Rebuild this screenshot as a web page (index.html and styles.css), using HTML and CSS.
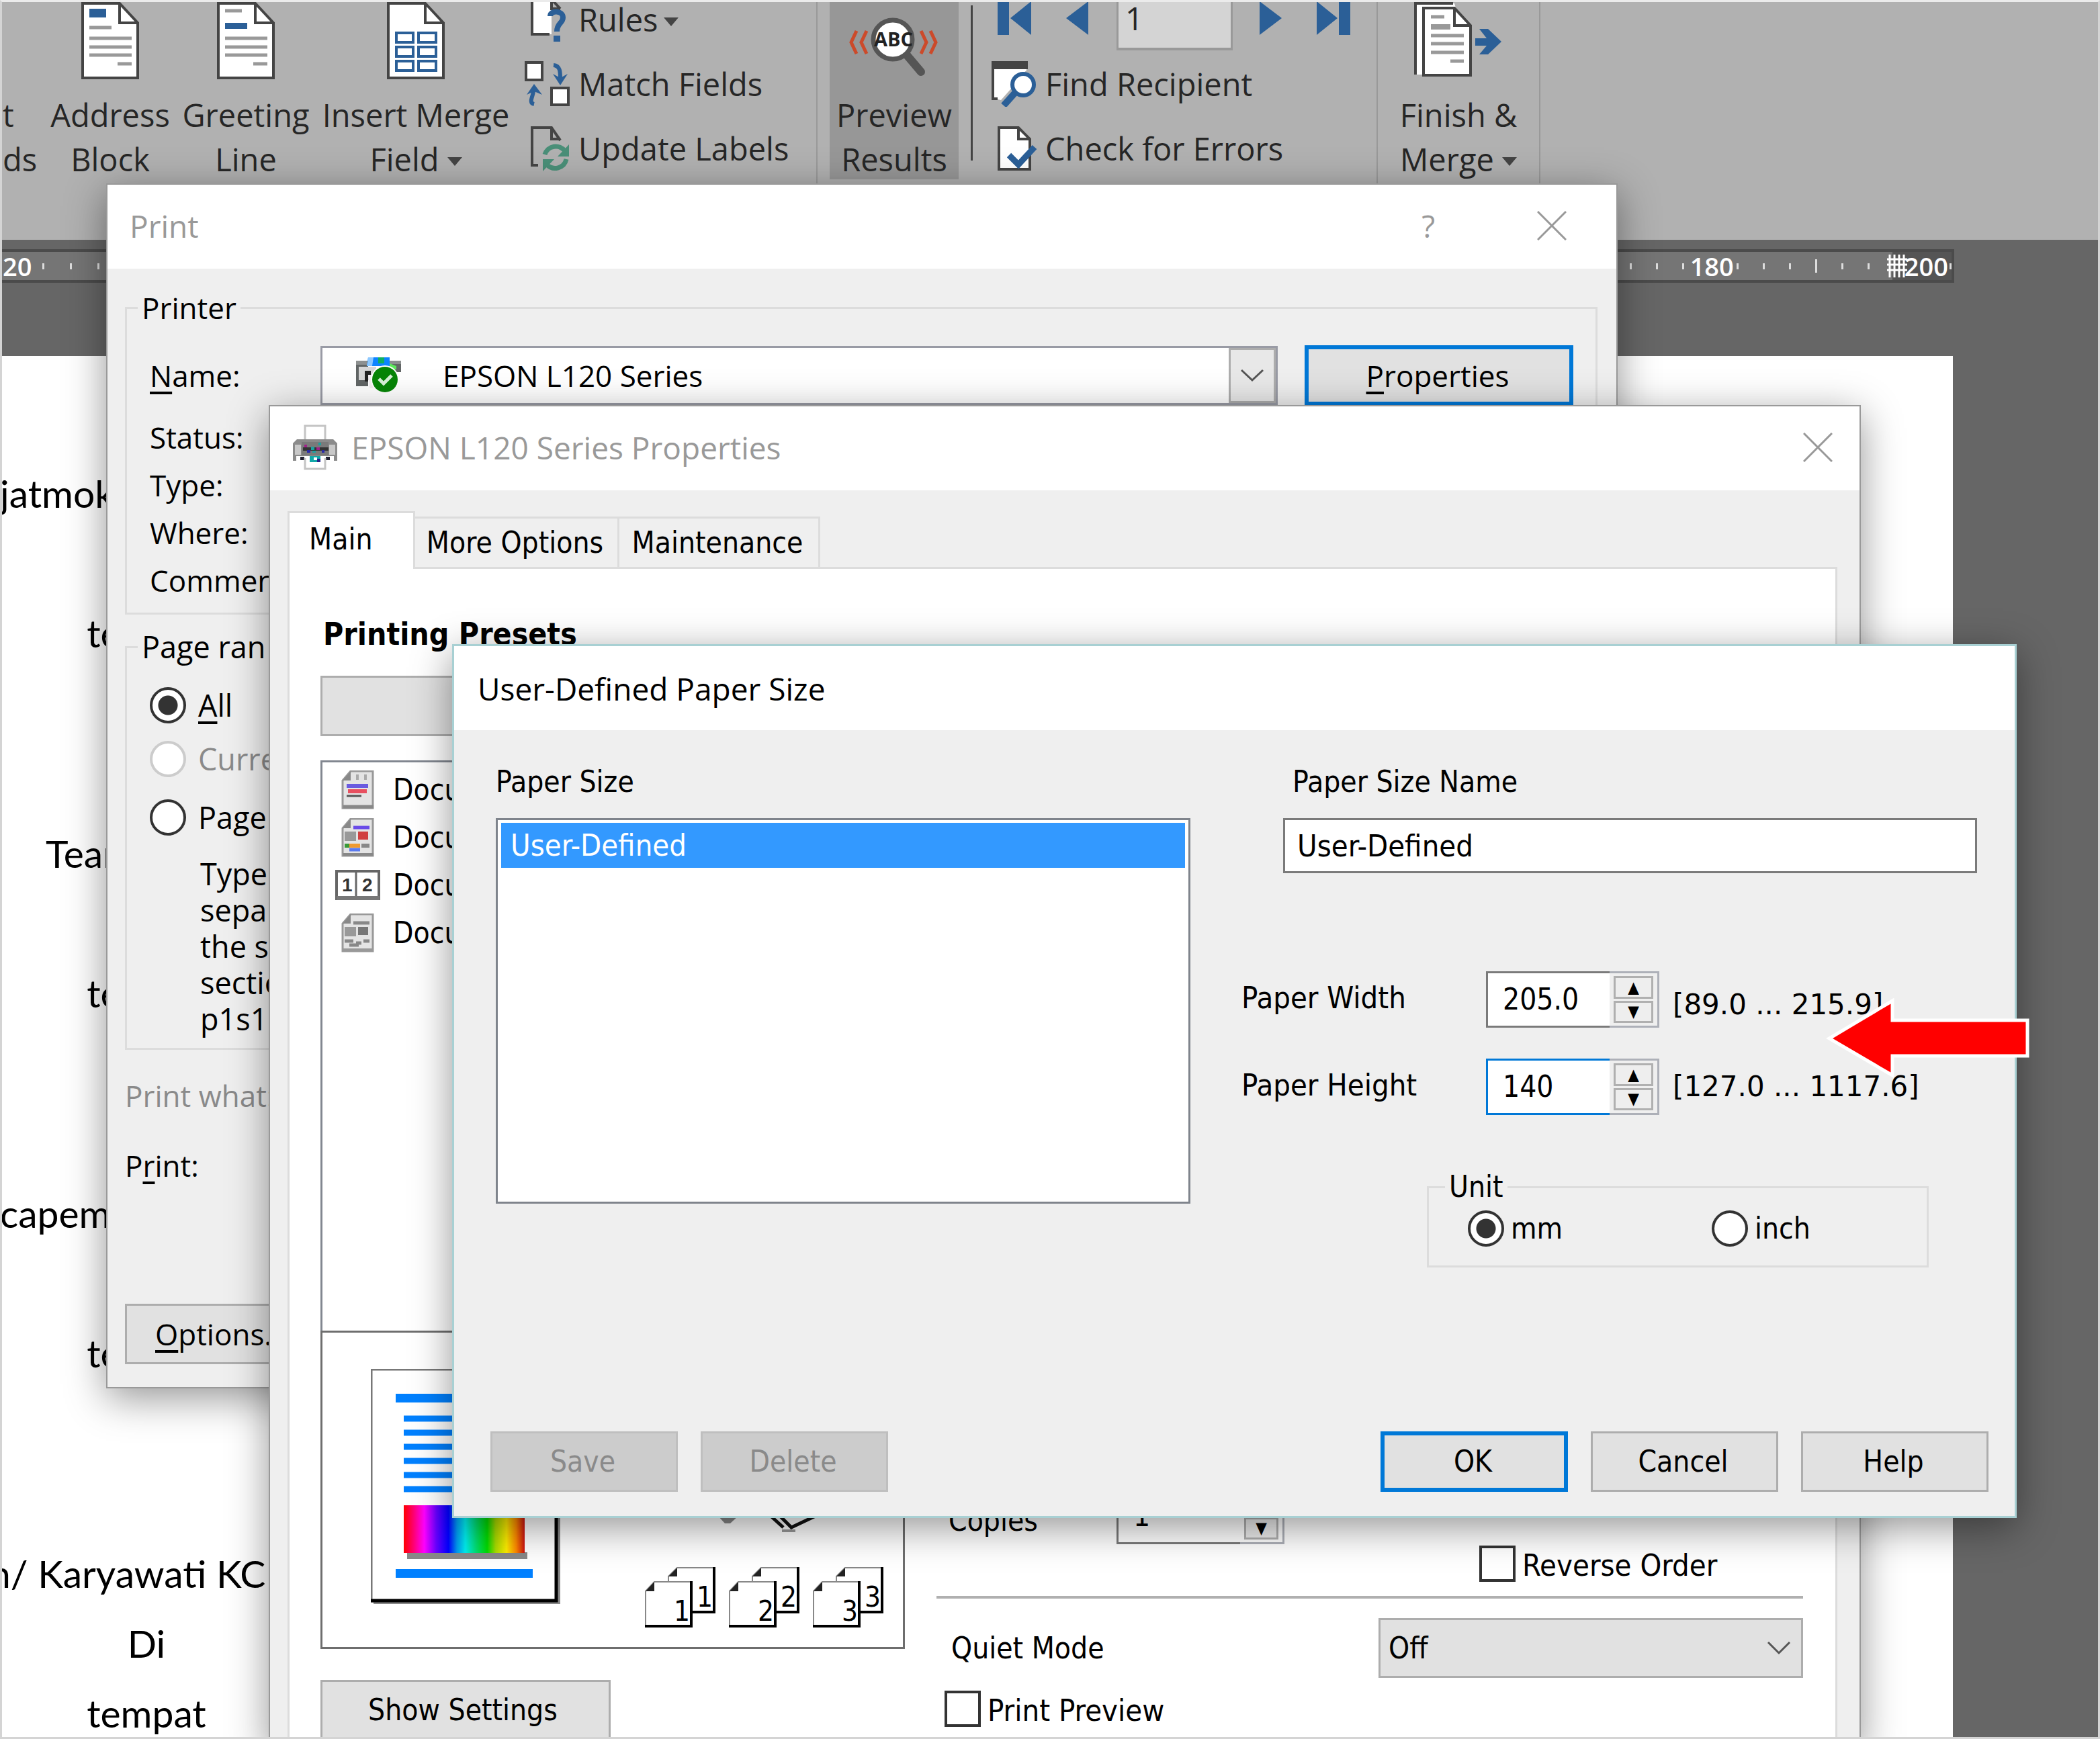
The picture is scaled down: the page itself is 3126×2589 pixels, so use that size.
FILE: index.html
```html
<!DOCTYPE html>
<html lang="en">
<head>
<meta charset="utf-8">
<title>User-Defined Paper Size</title>
<link rel="stylesheet" href="styles.css">
</head>
<body>
<div class="screen">

  <header class="ribbon">
    <button class="big cut" type="button"><span>t</span><span>ds</span></button>
    <button class="big address" type="button">
      <svg width="86" height="115" viewBox="0 0 86 115"><path d="M2 2H57L84 31V113H2Z" fill="#fff" stroke="#444" stroke-width="4"/><path d="M57 2V31H84" fill="none" stroke="#444" stroke-width="4"/><path d="M12 10h25v13H12z" fill="#2b5f97"/><path d="M12 38H45M12 54H75M12 67H75M12 79H75M54 92H75" stroke="#999" stroke-width="5"/></svg>
      <span>Address</span><span>Block</span>
    </button>
    <button class="big greeting" type="button">
      <svg width="86" height="115" viewBox="0 0 86 115"><path d="M2 2H57L84 31V113H2Z" fill="#fff" stroke="#444" stroke-width="4"/><path d="M57 2V31H84" fill="none" stroke="#444" stroke-width="4"/><path d="M12 31h33v9H12z" fill="#2b5f97"/><path d="M12 13H37M12 54H75M12 67H75M12 79H75M54 92H75" stroke="#999" stroke-width="5"/></svg>
      <span>Greeting</span><span>Line</span>
    </button>
    <button class="big merge" type="button">
      <svg width="86" height="115" viewBox="0 0 86 115"><path d="M2 2H57L84 31V113H2Z" fill="#fff" stroke="#444" stroke-width="4"/><path d="M57 2V31H84" fill="none" stroke="#444" stroke-width="4"/><path d="M14 46h25v14H14zM47 46h26v14H47zM14 67h25v14H14zM47 67h26v14H47zM14 88h25v14H14zM47 88h26v14H47z" fill="#fff" stroke="#2b5f97" stroke-width="4"/></svg>
      <span>Insert Merge</span><span>Field<i class="caret"></i></span>
    </button>
    <div class="stack fields">
      <button class="small" type="button">
        <svg width="68" height="68" viewBox="0 0 68 68"><path d="M11 4H40V56H11Z" fill="#fff"/><path d="M37 56H11V4H40M40 4L53 18M40 4V18H53" fill="none" stroke="#444" stroke-width="4"/><path d="M38 29C38 20 57 20 57 31C57 40 48 39 48 52" fill="none" stroke="#2b5f97" stroke-width="8"/><path d="M43 58h10v9H43z" fill="#2b5f97"/></svg>
        <span>Rules<i class="caret"></i></span>
      </button>
      <button class="small" type="button">
        <svg width="68" height="68" viewBox="0 0 68 68"><path d="M2 2h24v26H2zM40 40h25v25H40z" fill="#fff" stroke="#444" stroke-width="4"/><path d="M43 6C53 7 53 16 53 26M14 64C5 62 13 52 13 44" fill="none" stroke="#2b5f97" stroke-width="6"/><path d="M42 19L53 36L64 19L53 25ZM3 50L14 34L26 50L14 45Z" fill="#2b5f97"/></svg>
        Match Fields
      </button>
      <button class="small" type="button">
        <svg width="68" height="68" viewBox="0 0 68 68"><path d="M20 59H11V3H40L53 22M40 3V20H53" fill="none" stroke="#444" stroke-width="4"/><path d="M30 43A17 17 0 0 1 60 38M62 50A17 17 0 0 1 33 58" fill="none" stroke="#4a8f78" stroke-width="7"/><path d="M66 28V46H49ZM27 68V50H44Z" fill="#4a8f78"/></svg>
        Update Labels
      </button>
    </div>
    <button class="big preview" type="button">
      <svg width="140" height="115" viewBox="0 0 140 115"><path d="M14 43L6 60L14 77M29 43L21 60L29 77M110 43L118 60L110 77M124 43L132 60L124 77" fill="none" stroke="#cc4a2a" stroke-width="5"/><path d="M88 78L110 104" stroke="#555" stroke-width="12" stroke-linecap="round"/><circle cx="68" cy="56" r="29" fill="#fff" stroke="#555" stroke-width="7"/><text x="69" y="66" text-anchor="middle" class="abc">ABC</text></svg>
      <span>Preview</span><span>Results</span>
    </button>
    <div class="stack navigate">
      <div class="records">
        <button type="button" aria-label="First record"><svg width="50" height="50" viewBox="0 0 50 50"><path d="M0 0h17v50H0zM50 0V50L19 25Z" fill="#2b5f97"/></svg></button>
        <button type="button" aria-label="Previous record"><svg width="33" height="50" viewBox="0 0 33 50"><path d="M33 0V50L0 25Z" fill="#2b5f97"/></svg></button>
        <input type="text" value="1" aria-label="Record number">
        <button type="button" aria-label="Next record"><svg width="33" height="50" viewBox="0 0 33 50"><path d="M0 0V50L33 25Z" fill="#2b5f97"/></svg></button>
        <button type="button" aria-label="Last record"><svg width="50" height="50" viewBox="0 0 50 50"><path d="M33 0h17v50H33zM0 0V50L31 25Z" fill="#2b5f97"/></svg></button>
      </div>
      <button class="small" type="button">
        <svg width="68" height="68" viewBox="0 0 68 68"><path d="M4 12V56L14 58L30 40V30L52 14V12Z" fill="#fff"/><path d="M0 0H54V12H0Z" fill="#444"/><path d="M2 10V56H9" fill="none" stroke="#444" stroke-width="4"/><path d="M36 46L18 66" stroke="#2b5f97" stroke-width="10"/><circle cx="47" cy="35" r="16" fill="#fff" stroke="#2b5f97" stroke-width="6"/></svg>
        Find Recipient
      </button>
      <button class="small" type="button">
        <svg width="68" height="68" viewBox="0 0 68 68"><path d="M11 3H40L57 20V65H11Z" fill="#fff" stroke="#444" stroke-width="4"/><path d="M40 3V20H57" fill="none" stroke="#444" stroke-width="4"/><path d="M26 44L40 58L64 32" fill="none" stroke="#2b5f97" stroke-width="9"/></svg>
        Check for Errors
      </button>
    </div>
    <button class="big finish" type="button">
      <svg width="132" height="115" viewBox="0 0 132 115"><path d="M2 108V2H60L62 9H15V108Z" fill="#fff"/><path d="M2 108V2H58" fill="none" stroke="#444" stroke-width="4"/><path d="M14 9H60L84 35V109H14Z" fill="#fff" stroke="#444" stroke-width="4"/><path d="M60 9V35H84" fill="none" stroke="#444" stroke-width="4"/><path d="M25 22H45M25 50H74M25 62H74M25 75H74M54 88H74" stroke="#999" stroke-width="5"/><path d="M25 33h29v8H25z" fill="#999"/><path d="M91 54H108L97 40H110L130 59L110 78H97L108 65H91Z" fill="#2b5f97"/></svg>
      <span>Finish &amp;</span><span>Merge<i class="caret"></i></span>
    </button>
  </header>

  <div class="ruler">
    <div class="marks"><b>20</b><i></i><i></i><i></i></div>
    <div class="marks"><i></i><i></i><i></i><b>180</b><i></i><i></i><i></i><i class="half"></i><i></i><i></i></div>
    <div class="marks margin"><svg width="30" height="34" viewBox="0 0 30 34"><path d="M4 0V34M11 0V34M18 0V34M25 0V34M0 7H30M0 15H30M0 23H30" stroke="#fff" stroke-width="3"/></svg><b>200</b><i></i></div>
  </div>

  <main class="document">
    <section><p class="name">jatmoko</p><p>Di</p><p>tempat</p></section>
    <section><p class="name team">Team</p><p>Di</p><p>tempat</p></section>
    <section><p class="name">capem</p><p>Di</p><p>tempat</p></section>
    <section><p class="name staff">n/ Karyawati KCP</p><p>Di</p><p>tempat</p></section>
  </main>

  <section class="window print">
    <header class="titlebar">
      <h2>Print</h2>
      <button type="button" class="help" aria-label="Help">?</button>
      <button type="button" aria-label="Close"><svg width="44" height="44" viewBox="0 0 44 44"><path d="M1 1L43 43M43 1L1 43" stroke="#999" stroke-width="3"/></svg></button>
    </header>
    <div class="print-body">
      <fieldset class="printer">
        <legend>Printer</legend>
        <div class="name-row">
          <label for="printer-name"><u>N</u>ame:</label>
          <div class="combo">
            <svg width="68" height="54" viewBox="0 0 68 54"><path d="M0 5H18V43H0ZM49 5H67V22H49Z" fill="#626666"/><path d="M0 5H16V11H0ZM49 5H67V10H49Z" fill="#8d9090"/><path d="M4 14H30V34H4Z" fill="#d6d6d6"/><path d="M13 20H22V27H18V36H13Z" fill="#222"/><path d="M18 26H30V46H20Z" fill="#f4f0f2"/><path d="M18 0H50V13H16Z" fill="#0d84ff"/><path d="M18 0H26L24 13H16Z" fill="#8cc8ff"/><path d="M33 0H42V9H33Z" fill="#0fae62"/><path d="M50 9L60 13V18H50Z" fill="#5ce85c"/><circle cx="43" cy="33" r="21" fill="#fff"/><circle cx="43" cy="33" r="19" fill="#078507"/><path d="M34 32L41 39L53 27" fill="none" stroke="#d8f0d8" stroke-width="5"/></svg>
            <select id="printer-name"><option>EPSON L120 Series</option></select>
            <span class="drop"><svg width="36" height="20" viewBox="0 0 36 20"><path d="M2 2L18 17L34 2" fill="none" stroke="#555" stroke-width="3"/></svg></span>
          </div>
          <button type="button" class="btn default"><u>P</u>roperties</button>
        </div>
        <ul class="facts"><li>Status:</li><li>Type:</li><li>Where:</li><li>Comment:</li></ul>
      </fieldset>
      <fieldset class="range">
        <legend>Page ran</legend>
        <label class="choice"><input type="radio" name="range" checked><span><u>A</u>ll</span></label>
        <label class="choice off"><input type="radio" name="range" disabled><span>Current</span></label>
        <label class="choice tall"><input type="radio" name="range"><span>Pa<u>g</u>e</span></label>
        <p>Type<br>sepa<br>the s<br>section<br>p1s1,</p>
      </fieldset>
      <p class="line off">Print what:</p>
      <p class="line">P<u>r</u>int:</p>
      <button type="button" class="btn options"><u>O</u>ptions...</button>
    </div>
  </section>

  <section class="window properties">
    <header class="titlebar">
      <svg width="68" height="68" viewBox="0 0 68 68"><path d="M19 2H49V24H19Z" fill="#fff" stroke="#c4c4c4" stroke-width="3"/><path d="M7 22H61L67 28V54H1V28Z" fill="#8b8b8b"/><path d="M4 30H13V45H4ZM55 30H64V45H55Z" fill="#c8c8c8"/><path d="M14 26H54V46H14Z" fill="#7a7a7a"/><path d="M16 34H54V39H16Z" fill="#333"/><path d="M18 30h4v4h-4zM36 34h5v4h-5z" fill="#a0208a"/><path d="M22 38h5v4h-5zM44 38h4v4h-4z" fill="#2a2aa8"/><path d="M28 33h5v5h-5zM39 27h4v4h-4zM30 39h5v3h-5z" fill="#1ea0a0"/><path d="M6 47H62V55H6Z" fill="#fff"/><path d="M12 48h6v5h-6zM50 48h6v5h-6z" fill="#223"/><path d="M19 50V66H49V50" fill="#fff" stroke="#c4c4c4" stroke-width="3"/><path d="M26 47H42V56H26Z" fill="#12a8a8"/><path d="M32 49h5v4h-5z" fill="#fff"/><path d="M37 51h5v5h-5z" fill="#22228a"/></svg>
      <h2>EPSON L120 Series Properties</h2>
      <button type="button" aria-label="Close"><svg width="44" height="44" viewBox="0 0 44 44"><path d="M1 1L43 43M43 1L1 43" stroke="#999" stroke-width="3"/></svg></button>
    </header>
    <nav class="tabs">
      <button type="button" class="tab active">Main</button>
      <button type="button" class="tab more">More Options</button>
      <button type="button" class="tab upkeep">Maintenance</button>
    </nav>
    <div class="tab-page">
      <div class="presets">
        <h3>Printing Presets</h3>
        <button type="button" class="btn" aria-label="Add or remove presets"></button>
        <ul class="preset-list">
          <li><svg width="50" height="58" viewBox="0 0 50 58"><path d="M14 1H47V56H2V15Z" fill="#e4e4e4" stroke="#999" stroke-width="3"/><path d="M2 15H14V1Z" fill="#888"/><path d="M24 6V14M36 6V14" stroke="#aaa" stroke-width="4"/><path d="M8 23H40" stroke="#6a5be0" stroke-width="6"/><path d="M10 31H38" stroke="#e85060" stroke-width="6"/><path d="M8 38H30" stroke="#555" stroke-width="3"/><path d="M3 54H48" stroke="#888" stroke-width="5"/></svg>Document</li>
          <li><svg width="50" height="58" viewBox="0 0 50 58"><path d="M14 1H47V56H2V15Z" fill="#e4e4e4" stroke="#999" stroke-width="3"/><path d="M2 15H14V1Z" fill="#888"/><path d="M18 14H42" stroke="#6a4be8" stroke-width="5"/><path d="M5 20H22V34H5Z" fill="#999"/><path d="M25 20H40V32H25Z" fill="#d04040"/><path d="M5 41H12" stroke="#3a9a3a" stroke-width="6"/><path d="M12 41H28" stroke="#f09a30" stroke-width="6"/><path d="M12 47H28" stroke="#5a7af0" stroke-width="5"/><path d="M30 41H42" stroke="#888" stroke-width="6"/><path d="M3 54H48" stroke="#888" stroke-width="4"/></svg>Document</li>
          <li><svg width="68" height="46" viewBox="0 0 68 46"><path d="M2 2H65V43H2Z" fill="#fff" stroke="#666" stroke-width="4"/><path d="M31 2V41" stroke="#666" stroke-width="3"/><path d="M2 42H66" stroke="#777" stroke-width="6"/><text x="10" y="32" class="pages">1</text><text x="40" y="32" class="pages">2</text></svg>Document</li>
          <li><svg width="50" height="58" viewBox="0 0 50 58"><path d="M14 1H47V56H2V15Z" fill="#e4e4e4" stroke="#999" stroke-width="3"/><path d="M2 15H14V1Z" fill="#888"/><path d="M18 14H42" stroke="#888" stroke-width="5"/><path d="M5 20H22V34H5Z" fill="#999"/><path d="M25 20H40V32H25Z" fill="#777"/><path d="M5 41H18M22 44H30M33 41H42M12 47H26" stroke="#888" stroke-width="5"/><path d="M3 54H48" stroke="#999" stroke-width="4"/></svg>Document</li>
        </ul>
        <div class="sheet-box">
          <svg width="284" height="352" viewBox="0 0 284 352">
            <defs><linearGradient id="spectrum"><stop offset="0" stop-color="#f00"/><stop offset=".08" stop-color="#ff0070"/><stop offset=".17" stop-color="#f0f"/><stop offset=".27" stop-color="#60f"/><stop offset=".37" stop-color="#00f"/><stop offset=".44" stop-color="#09e"/><stop offset=".51" stop-color="#0ee"/><stop offset=".6" stop-color="#00e070"/><stop offset=".69" stop-color="#0d0"/><stop offset=".76" stop-color="#ad0"/><stop offset=".85" stop-color="#fe0"/><stop offset=".93" stop-color="#f80"/><stop offset="1" stop-color="#c11"/></linearGradient></defs>
            <path d="M4 348H280V6" fill="none" stroke="#888" stroke-width="4"/>
            <path d="M1 1H276V346H1Z" fill="#fff" stroke="#777" stroke-width="3"/>
            <path d="M0 345H276V0" fill="none" stroke="#000" stroke-width="5"/>
            <path d="M37 37H241V50H37ZM37 298H241V311H37Z" fill="#0080ff"/>
            <path d="M49 74H229M49 95H229M49 116H229M49 137H229M49 158H229M49 179H229" stroke="#0080ff" stroke-width="9"/>
            <path d="M54 273H233V283H54Z" fill="#888"/>
            <path d="M49 203H229V274H49Z" fill="url(#spectrum)"/>
          </svg>
          <div class="output">
            <svg width="360" height="40" viewBox="0 0 360 40"><path d="M108 6H140L127 18H119Z" fill="#888"/><path d="M184 4L206 24M198 4L218 24L256 6" fill="none" stroke="#111" stroke-width="5"/><path d="M204 29H224" stroke="#999" stroke-width="4"/></svg>
            <div class="collate">
              <svg width="105" height="90" viewBox="0 0 105 90"><path d="M48 1H103V67H35V14Z" fill="#fff" stroke="#888" stroke-width="2"/><path d="M103 0V67H60" fill="none" stroke="#000" stroke-width="4"/><path d="M48 1V14H35Z" fill="#222"/><text x="77" y="59" class="num">1</text><path d="M14 22H69V88H1V36Z" fill="#fff" stroke="#888" stroke-width="2"/><path d="M69 21V88H0" fill="none" stroke="#000" stroke-width="4"/><path d="M14 22V36H1Z" fill="#222"/><text x="43" y="80" class="num">1</text></svg>
              <svg width="105" height="90" viewBox="0 0 105 90"><path d="M48 1H103V67H35V14Z" fill="#fff" stroke="#888" stroke-width="2"/><path d="M103 0V67H60" fill="none" stroke="#000" stroke-width="4"/><path d="M48 1V14H35Z" fill="#222"/><text x="77" y="59" class="num">2</text><path d="M14 22H69V88H1V36Z" fill="#fff" stroke="#888" stroke-width="2"/><path d="M69 21V88H0" fill="none" stroke="#000" stroke-width="4"/><path d="M14 22V36H1Z" fill="#222"/><text x="43" y="80" class="num">2</text></svg>
              <svg width="105" height="90" viewBox="0 0 105 90"><path d="M48 1H103V67H35V14Z" fill="#fff" stroke="#888" stroke-width="2"/><path d="M103 0V67H60" fill="none" stroke="#000" stroke-width="4"/><path d="M48 1V14H35Z" fill="#222"/><text x="77" y="59" class="num">3</text><path d="M14 22H69V88H1V36Z" fill="#fff" stroke="#888" stroke-width="2"/><path d="M69 21V88H0" fill="none" stroke="#000" stroke-width="4"/><path d="M14 22V36H1Z" fill="#222"/><text x="43" y="80" class="num">3</text></svg>
            </div>
          </div>
        </div>
        <button type="button" class="btn show">Show Settings</button>
      </div>
      <div class="job">
        <div class="copies">
          <label for="copies">Copies</label>
          <span class="spin"><input id="copies" type="text" value="1"><span class="steps"><button type="button" aria-label="More">▲</button><button type="button" aria-label="Fewer">▼</button></span></span>
        </div>
        <label class="tick reverse"><input type="checkbox"><span>Reverse Order</span></label>
        <hr>
        <div class="quiet">
          <label for="quiet">Quiet Mode</label>
          <div class="pick"><select id="quiet"><option>Off</option></select><svg width="36" height="22" viewBox="0 0 36 22"><path d="M2 2L18 18L34 2" fill="none" stroke="#555" stroke-width="3"/></svg></div>
        </div>
        <label class="tick"><input type="checkbox"><span>Print Preview</span></label>
      </div>
    </div>
  </section>

  <section class="window paper">
    <header class="titlebar"><h2>User-Defined Paper Size</h2></header>
    <div class="paper-body">
      <div class="sizes">
        <span id="sizes-label">Paper Size</span>
        <ul role="listbox" aria-labelledby="sizes-label"><li role="option" aria-selected="true">User-Defined</li></ul>
      </div>
      <div class="details">
        <div class="size-name">
          <label for="size-name">Paper Size Name</label>
          <input id="size-name" type="text" value="User-Defined">
        </div>
        <div class="measure">
          <label for="width">Paper Width</label>
          <span class="spin"><input id="width" type="text" value="205.0"><span class="steps"><button type="button" aria-label="Wider">▲</button><button type="button" aria-label="Narrower">▼</button></span></span>
          <span class="limits">[89.0 ... 215.9]</span>
        </div>
        <div class="measure">
          <label for="height">Paper Height</label>
          <span class="spin focus"><input id="height" type="text" value="140"><span class="steps"><button type="button" aria-label="Taller">▲</button><button type="button" aria-label="Shorter">▼</button></span></span>
          <span class="limits">[127.0 ... 1117.6]</span>
        </div>
        <fieldset class="unit">
          <legend>Unit</legend>
          <label class="choice"><input type="radio" name="unit" checked><span>mm</span></label>
          <label class="choice"><input type="radio" name="unit"><span>inch</span></label>
        </fieldset>
      </div>
    </div>
    <footer class="actions">
      <button type="button" class="btn" disabled>Save</button>
      <button type="button" class="btn" disabled>Delete</button>
      <button type="button" class="btn default push">OK</button>
      <button type="button" class="btn">Cancel</button>
      <button type="button" class="btn">Help</button>
    </footer>
  </section>

  <svg class="pointer" width="310" height="124" viewBox="0 0 310 124"><path d="M7 62L101 6V35H302V88H101V117Z" fill="#f00" stroke="#fff" stroke-width="5"/></svg>
</div>
</body>
</html>
```

FILE: styles.css
```css
*, *::before, *::after { box-sizing: border-box; }
body, h2, h3, p, ul, fieldset, legend { margin: 0; padding: 0; }
ul { list-style: none; }
svg { display: block; flex: none; }
button, input, select { font: inherit; color: inherit; margin: 0; border-radius: 0; outline: 0; }
button { background: none; border: 0; padding: 0; }

.screen {
  position: relative;
  height: 100vh;
  overflow: hidden;
  background: #666;
  color: #000;
  font-family: "Open Sans", "Noto Sans", sans-serif;
  font-size: 44px;
  line-height: 60px;
}
.screen::after {
  content: "";
  position: absolute;
  inset: 0;
  border: 3px solid #d4d4d4;
  border-top-color: #ebebeb;
  pointer-events: none;
}

/* Ribbon */
.ribbon {
  display: flex;
  align-items: stretch;
  height: 357px;
  overflow: hidden;
  background: #b1b1b1;
  color: #262626;
  font-size: 47px;
  line-height: 66px;
}
.big {
  display: flex;
  flex-direction: column;
  align-items: center;
  height: 267px;
  padding-top: 3px;
}
.big svg { margin-bottom: 20px; }
.cut { width: 61px; padding-top: 138px; align-items: flex-start; }
.cut span { padding-left: 4px; }
.address { width: 206px; }
.greeting { width: 198px; }
.merge { width: 308px; }
.preview { width: 192px; margin: 0 18px; background: #979797; }
.finish { width: 242px; height: 357px; border-right: 2px solid #999; }
.abc { font: bold 29px "Open Sans", sans-serif; fill: #222; }
.caret {
  display: inline-block;
  margin-left: 12px;
  border: 11px solid transparent;
  border-top: 13px solid #444;
  border-bottom: 0;
  vertical-align: 8px;
}
.stack { display: flex; flex-direction: column; }
.fields { width: 444px; margin-top: -19px; padding-left: 8px; border-right: 2px solid #999; }
.small { display: flex; align-items: center; gap: 12px; height: 96px; }
.small .caret { margin-left: 8px; }
.navigate { width: 606px; border-right: 2px solid #999; position: relative; padding-left: 31px; }
.navigate::before {
  content: "";
  position: absolute;
  left: 0;
  top: 8px;
  height: 231px;
  border-left: 3px solid #444;
}
.records { display: flex; height: 77px; padding: 2px 0 0 9px; }
.records button { width: 50px; height: 50px; margin-right: 52px; }
.records input + button { width: 33px; }
.records button:nth-child(2) { width: 33px; margin-right: 42px; }
.records input {
  width: 173px;
  height: 73px;
  margin-right: 40px;
  padding: 0 0 20px 10px;
  border: solid #999;
  border-width: 0 3px 4px;
  background: #d4d4d4;
}

/* Ruler */
.ruler {
  display: flex;
  justify-content: flex-end;
  height: 50px;
  margin: 14px 217px 0 0;
  border: 4px solid #4b4b4b;
  border-left: 0;
  background: #757575;
  color: #fff;
  font-size: 38px;
  line-height: 44px;
}
.marks { display: flex; align-items: center; gap: 36px; }
.marks:first-child { gap: 38px; margin-right: auto; padding-left: 4px; }
.marks i { width: 3px; height: 9px; background: #ddd; }
.marks .half { height: 20px; }
.marks b { font-weight: 600; margin: 0 -32px 0 -27px; }
.marks:first-child b { margin: 0 -22px 0 0; }
.margin { gap: 0; margin-left: 26px; background: linear-gradient(90deg, transparent 8px, #555 8px); }
.margin b { margin: 0 2px 0 -4px; }

/* Document */
.document {
  display: flex;
  flex-direction: column;
  gap: 224px;
  height: 100%;
  margin: 109px 219px 0 0;
  padding-top: 152px;
  background: #fff;
  font-family: Lato, "Open Sans", sans-serif;
  font-size: 57px;
  line-height: 104px;
  white-space: nowrap;
}
.document p { width: 436px; text-align: center; }
.document .name { text-align: left; }
.document .team { padding-left: 68px; }
.document .staff { text-indent: -16px; }

/* Windows */
.window {
  position: absolute;
  border: 2px solid #999;
  background: #efefef;
  box-shadow: 0 14px 56px rgba(0, 0, 0, .42);
}
.titlebar {
  display: flex;
  align-items: center;
  height: 125px;
  padding: 0 42px 4px 33px;
  background: #fff;
  color: #999;
  font-size: 46px;
}
.titlebar h2 { flex: 1; font-size: 46px; font-weight: 400; }
.help { margin-right: 152px; }
fieldset { --inset: 0px; min-width: 0; border: 3px solid #dcdcdc; }
legend { margin-left: calc(16px - var(--inset)); padding: 0 6px; }
u { text-decoration-thickness: 4px; text-underline-offset: 7px; }

.btn {
  height: 90px;
  padding-right: 4px;
  border: 3px solid #adadad;
  background: #e1e1e1;
  text-align: center;
}
.btn.default { border: 6px solid #0078d7; }
.btn:disabled { border-color: #bfbfbf; background: #ccc; color: #8a8a8a; }

.choice, .tick { display: flex; align-items: center; }
input[type="radio"], input[type="checkbox"] {
  appearance: none;
  flex: none;
  width: 54px;
  height: 54px;
  border: 4px solid #333;
  background: #fff;
}
input[type="radio"] { border-radius: 50%; }
input[type="radio"]:checked { background: radial-gradient(circle, #333 14px, #fff 15px); }
input[type="radio"]:disabled { border-color: #ccc; }
.off { color: #8a8a8a; }

/* Print */
.print { left: 158px; top: 273px; width: 2250px; }
.print .titlebar { padding-right: 74px; }
.print-body { padding: 28px 28px 34px 26px; }
.name-row {
  display: grid;
  grid-template-columns: 254px 1fr 400px;
  align-items: center;
  padding: 26px 33px 0 34px;
}
.combo {
  display: flex;
  align-items: center;
  height: 88px;
  margin-right: 40px;
  padding-left: 50px;
  border: 3px solid #999ba5;
  background: #fff;
}
.combo select {
  flex: 1;
  height: 82px;
  appearance: none;
  border: 0;
  padding: 0 0 0 61px;
  background: none;
}
.drop {
  display: flex;
  align-items: center;
  justify-content: center;
  width: 70px;
  height: 82px;
  border: 3px solid #adadad;
  background: #e8e8e8;
}
.facts { padding: 12px 34px; line-height: 71px; }
.range { --inset: 34px; margin-top: 18px; padding: 17px 34px 16px; font-size: 45px; white-space: nowrap; }
.range .choice { height: 80px; gap: 18px; }
.range .choice.tall { height: 94px; }
.range p { margin-top: 10px; padding-left: 75px; line-height: 54px; }
.line { margin-top: 38px; }
.line + .line { margin-top: 44px; }
.options { width: 300px; margin-top: 176px; padding-left: 42px; text-align: left; }

/* Printer properties */
.properties {
  left: 400px;
  top: 603px;
  bottom: -12px;
  width: 2370px;
  font-family: "DejaVu Sans Condensed", "Open Sans", sans-serif;
  line-height: 52px;
}
.properties .titlebar, .paper .titlebar { font-family: "Open Sans", "Noto Sans", sans-serif; line-height: 60px; }
.properties .titlebar { gap: 20px; padding-right: 40px; }
.tabs { display: flex; align-items: flex-end; padding: 31px 0 0 26px; }
.tab { height: 78px; padding-right: 4px; border: 3px solid #dcdcdc; border-left: 0; }
.tab.active {
  position: relative;
  z-index: 1;
  width: 190px;
  height: 86px;
  padding: 0 0 6px 29px;
  border-left: 3px solid #dcdcdc;
  border-bottom: 0;
  background: #fff;
  text-align: left;
}
.tab.more { width: 304px; }
.tab.upkeep { width: 299px; }
.tab-page {
  display: flex;
  gap: 47px;
  height: 100%;
  max-height: 1800px;
  margin: -3px 33px 0 26px;
  padding: 71px 48px 0 46px;
  border: 3px solid #dcdcdc;
  background: #fff;
}
.presets { display: flex; flex-direction: column; width: 870px; }
.presets h3 { margin-bottom: 36px; padding-left: 4px; font-size: 46px; font-weight: 700; }
.preset-list {
  height: 849px;
  margin-top: 36px;
  padding-top: 5px;
  border: 3px solid #828790;
  border-bottom: 0;
}
.preset-list li { display: grid; grid-template-columns: 105px 1fr; align-items: center; height: 71px; }
.preset-list svg { justify-self: center; }
.pages { font: bold 28px "Liberation Sans", sans-serif; fill: #333; }
.sheet-box { display: flex; justify-content: space-between; height: 474px; padding: 54px 24px 0 72px; border: 3px solid #6e6e6e; }
.output { display: flex; flex-direction: column; gap: 43px; padding-top: 212px; }
.collate { display: flex; gap: 20px; }
.num { font: 42px "DejaVu Sans Condensed", "Open Sans", sans-serif; fill: #000; }
.show { width: 432px; margin-top: 46px; padding-right: 8px; }
.job { display: flex; flex-direction: column; flex: 1; height: 1672px; padding-bottom: 18px; justify-content: flex-end; }
.copies { display: grid; grid-template-columns: 250px 1fr; align-items: center; padding-left: 18px; margin-bottom: 1px; }
.copies label { padding-top: 14px; }
.copies .spin { width: 250px; }
.copies input { padding-top: 10px; }
.tick { gap: 10px; height: 56px; padding-left: 12px; font-size: 45px; }
.tick span { padding-top: 6px; }
.reverse { padding-left: 808px; }
hr { width: 100%; height: 4px; margin: 20px 0 29px; border: 0; background: #b0b0b0; }
.quiet { display: grid; grid-template-columns: 1fr 632px; align-items: center; margin-bottom: 18px; padding-left: 22px; }
.pick { display: grid; align-items: center; }
.pick select, .pick svg { grid-area: 1 / 1; }
.pick select { height: 89px; appearance: none; padding: 0 12px; border: 3px solid #adadad; background: #e1e1e1; }
.pick svg { justify-self: end; margin-right: 18px; pointer-events: none; }

.spin { display: flex; width: 258px; height: 84px; font-family: "DejaVu Sans Condensed", "Open Sans", sans-serif; }
.spin input {
  width: 184px;
  padding: 0 0 0 22px;
  border: 3px solid #7a7a7a;
  border-right: 0;
  background: #fff;
}
.spin.focus input { border-color: #0078d7; }
.steps {
  display: flex;
  flex-direction: column;
  gap: 3px;
  flex: 1;
  padding: 4px 6px;
  border: 3px solid #adb0b8;
  border-left: 0;
}
.steps button { flex: 1; border: 3px solid #b0b0b0; background: #eee; font-size: 24px; line-height: 24px; color: #000; }

/* Paper size */
.paper {
  left: 673px;
  top: 959px;
  width: 2329px;
  border: 3px solid #a8d0d3;
  font-family: "DejaVu Sans Condensed", "Open Sans", sans-serif;
  line-height: 52px;
}
.paper .titlebar { padding-left: 35px; padding-bottom: 0; color: #000; }
.paper-body { display: flex; justify-content: space-between; padding: 51px 56px 0 62px; }
.sizes { display: flex; flex-direction: column; gap: 28px; width: 1034px; }
.sizes ul { height: 574px; padding: 4px 5px; border: 3px solid #7f848c; background: #fff; }
.sizes li { padding: 8px 14px 7px; background: #39f; color: #fff; font-size: 45px; }
.details { width: 1095px; }
.size-name { display: flex; flex-direction: column; gap: 28px; margin-left: 62px; }
.size-name label { padding-left: 14px; }
.size-name input { height: 82px; padding: 0 18px; border: 3px solid #7a7a7a; background: #fff; font-size: 45px; }
.measure { display: grid; grid-template-columns: 364px 258px 1fr; align-items: center; margin-top: 46px; }
.measure label { padding-bottom: 4px; font-size: 45px; }
.size-name + .measure { margin-top: 146px; }
.limits { padding-left: 20px; font-family: "DejaVu Sans", sans-serif; font-size: 42px; }
.size-name + .measure .limits { padding-top: 16px; }
.unit { --inset: 50px; display: grid; grid-template-columns: 363px 1fr; margin: 81px 72px 0 276px; padding: 0 0 19px 58px; }
.unit .choice { gap: 10px; height: 72px; }
.actions { display: flex; gap: 34px; padding: 244px 39px 36px 54px; }
.actions .btn { width: 279px; }
.push { margin-left: auto; }

.pointer { position: absolute; left: 2716px; top: 1484px; }
```
